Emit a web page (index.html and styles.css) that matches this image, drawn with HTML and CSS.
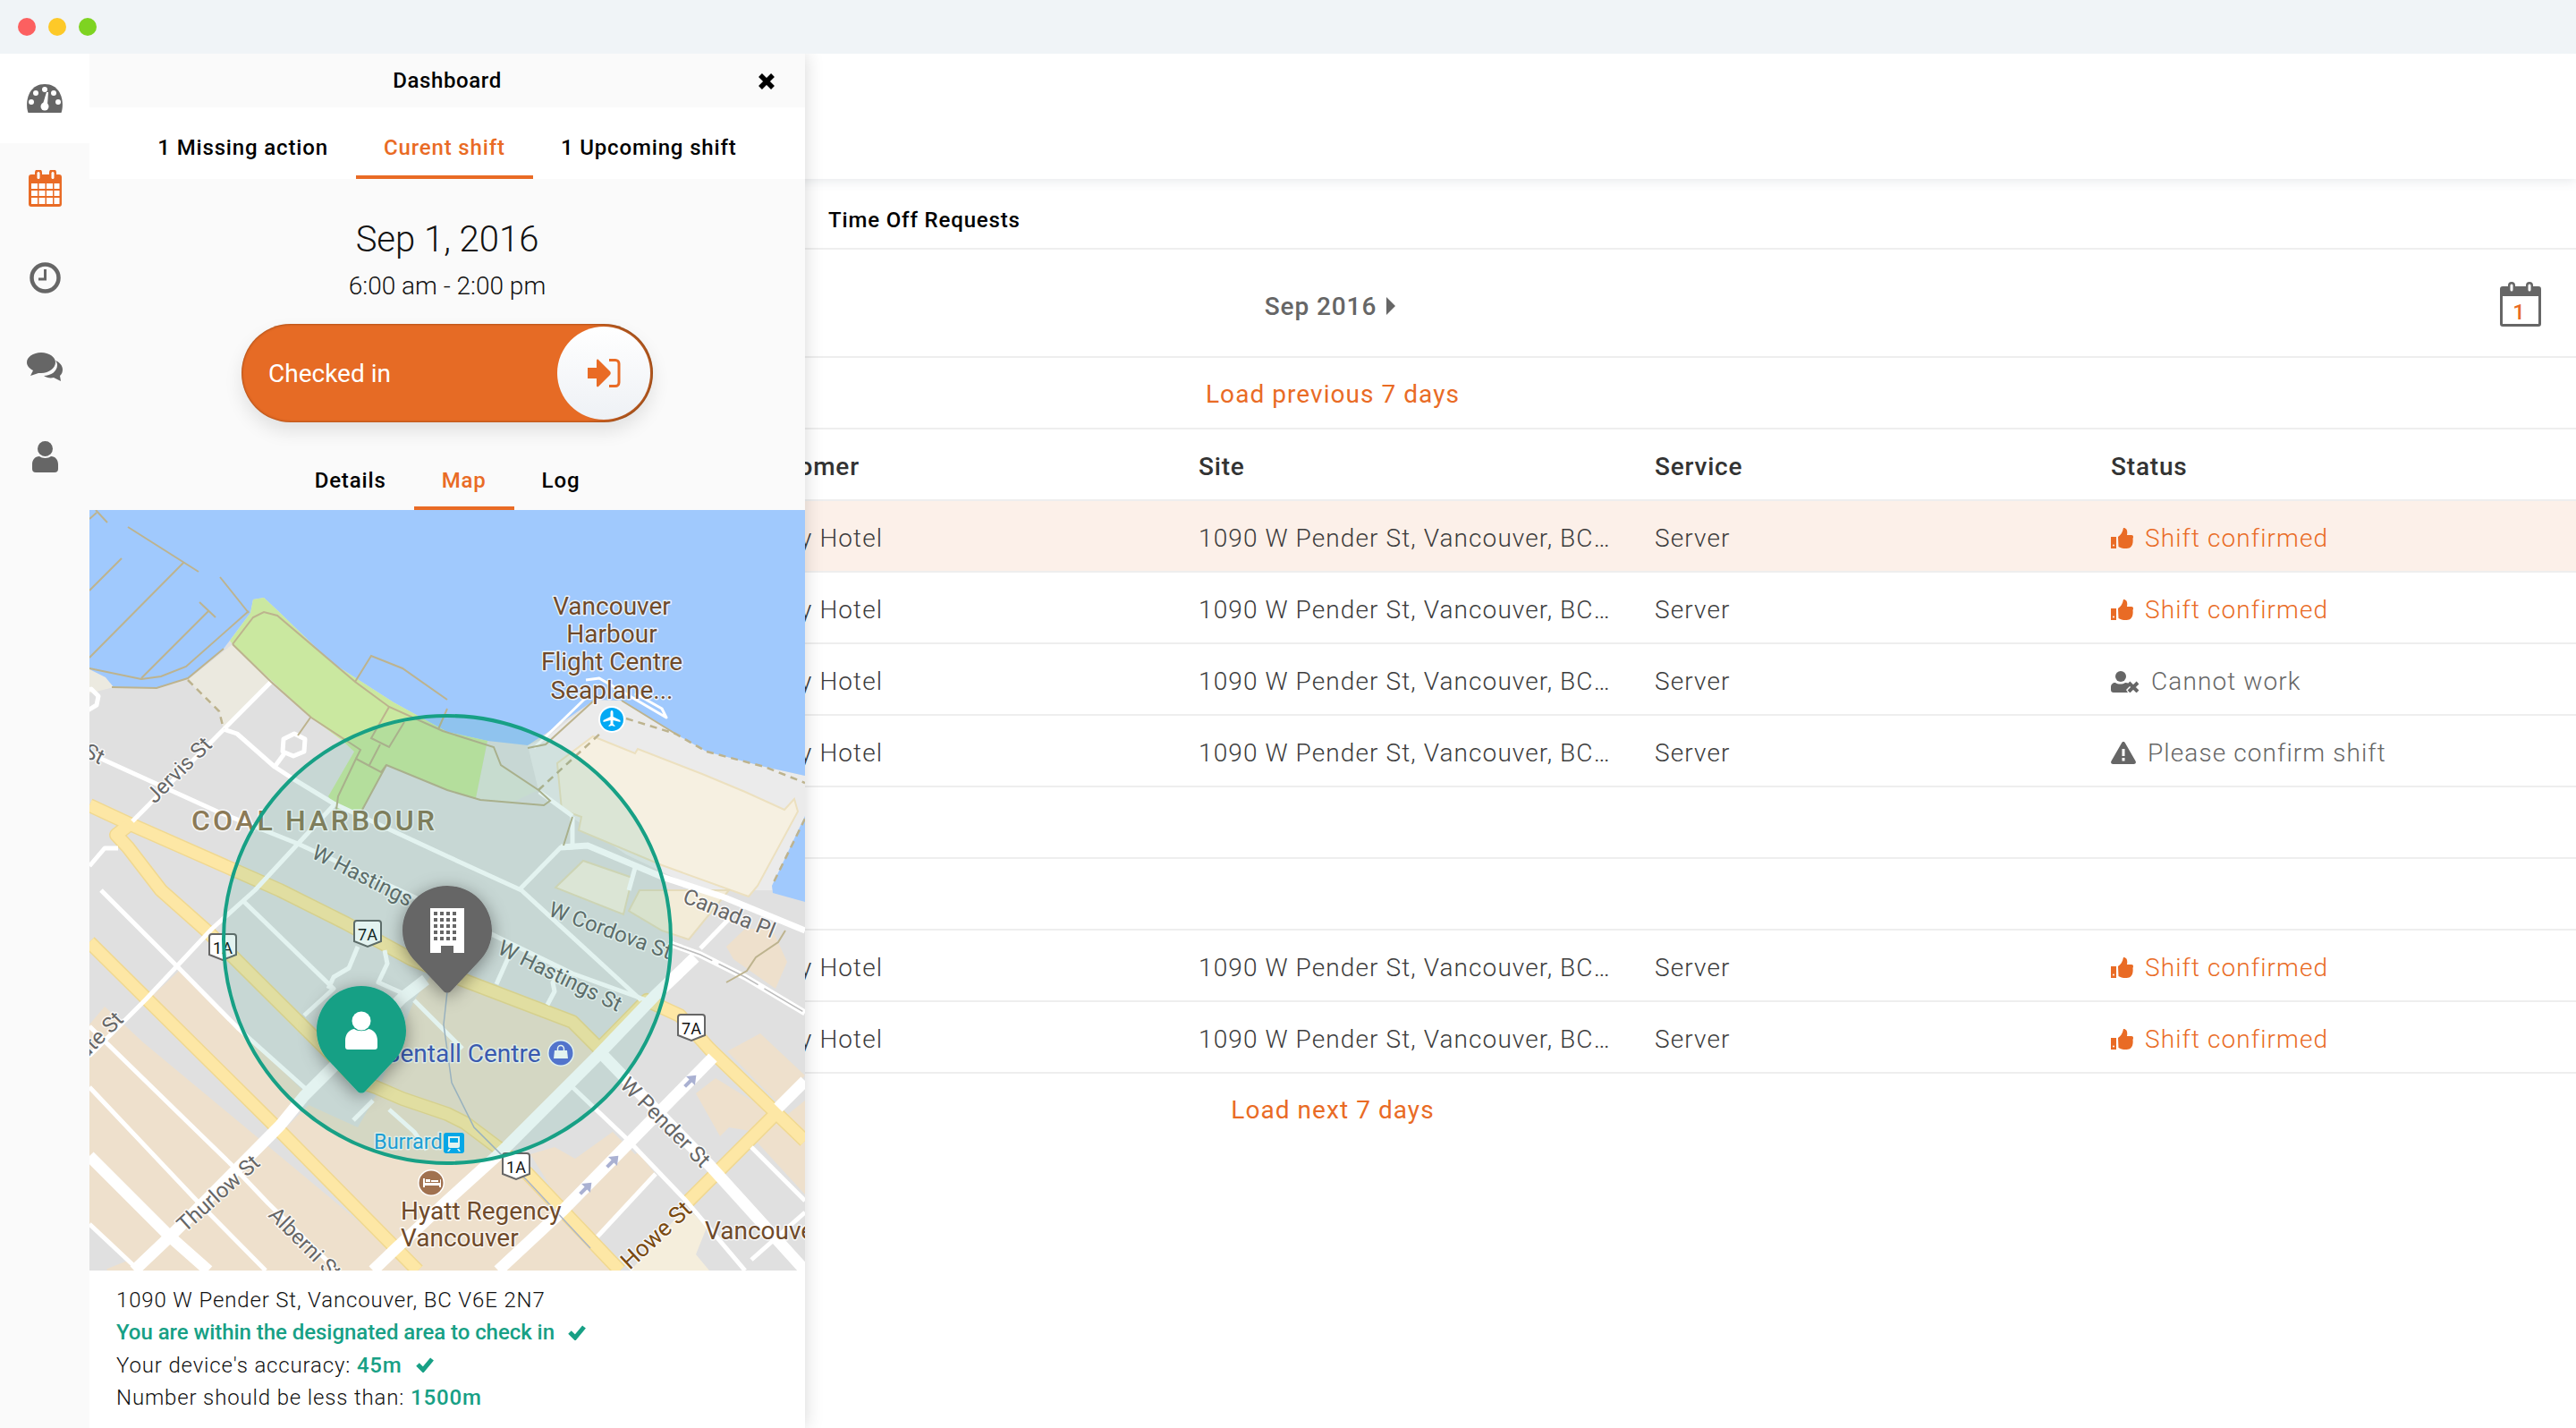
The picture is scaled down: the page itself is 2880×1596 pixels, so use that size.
FILE: index.html
```html
<!DOCTYPE html>
<html lang="en">
<head>
<meta charset="utf-8">
<title>Dashboard</title>
<link rel="stylesheet" href="styles.css">
</head>
<body>
<header class="titlebar">
  <span class="dot dot-red"></span><span class="dot dot-yellow"></span><span class="dot dot-green"></span>
</header>
<div class="app">
  <nav class="sidebar">
    <a class="nav-item nav-active">
      <svg width="40" height="32" viewBox="0 0 40 32"><path fill="#666" d="M1.500 32C-2 23 0 0 20 0s22 23 18.500 32Z"/><g fill="#fff"><circle cx="20" cy="6" r="3"/><circle cx="10" cy="10" r="3"/><circle cx="30" cy="10" r="3"/><circle cx="5" cy="20" r="3"/><circle cx="35" cy="20" r="3"/><circle cx="20" cy="25" r="4.500"/><path d="M18 22 22 9h2l-1 14Z"/></g></svg>
    </a>
    <a class="nav-item">
      <svg width="37" height="41" viewBox="0 0 37 41"><path fill="#e96b25" d="M3 5h4V3a4 4 0 0 1 8 0v2h8V3a4 4 0 0 1 8 0v2h3a3 3 0 0 1 3 3v30a3 3 0 0 1-3 3H3a3 3 0 0 1-3-3V8a3 3 0 0 1 3-3Z"/><g fill="#fff"><rect x="9.500" y="2" width="3" height="8" rx="1.500"/><rect x="25.500" y="2" width="3" height="8" rx="1.500"/><rect x="3" y="15" width="7" height="6"/><rect x="11.500" y="15" width="7" height="6"/><rect x="20" y="15" width="7" height="6"/><rect x="28.500" y="15" width="6" height="6"/><rect x="3" y="23" width="7" height="6"/><rect x="11.500" y="23" width="7" height="6"/><rect x="20" y="23" width="7" height="6"/><rect x="28.500" y="23" width="6" height="6"/><rect x="3" y="31" width="7" height="7"/><rect x="11.500" y="31" width="7" height="7"/><rect x="20" y="31" width="7" height="7"/><rect x="28.500" y="31" width="6" height="7"/></g></svg>
    </a>
    <a class="nav-item">
      <svg width="35" height="35" viewBox="0 0 35 35"><circle cx="17.500" cy="17.500" r="15" fill="none" stroke="#666" stroke-width="4.500"/><path fill="none" stroke="#666" stroke-width="3" d="M17.500 8v11H10"/></svg>
    </a>
    <a class="nav-item">
      <svg width="40" height="32" viewBox="0 0 40 32"><path fill="#666" d="M32 9c5 2 8 6 8 10 0 3-1 5-3 7l1 6-8-4c-4 1-8 0-11-2 8 0 15-5 15-12 0-2-1-4-2-5Z"/><path fill="#666" d="M16 0c9 0 16 5 16 11s-7 12-16 12l-3 0-9 3 3-6c-4-2-7-5-7-9C0 5 7 0 16 0Z"/></svg>
    </a>
    <a class="nav-item">
      <svg width="29" height="35" viewBox="0 0 29 35"><circle cx="14.500" cy="8.500" r="8.500" fill="#666"/><path fill="#666" d="M8 17c3 2.500 10 2.500 13 0 5 0 8 4 8 9v5a4 4 0 0 1-4 4H4a4 4 0 0 1-4-4v-5c0-5 3-9 8-9Z"/></svg>
    </a>
  </nav>

  <main class="main">
    <div class="topbar"></div>
    <div class="row tabs-row"><span class="tab-title">Time Off Requests</span></div>
    <div class="row cal-row">
      <span class="month">Sep 2016</span><span class="month-caret"></span>
      <svg class="cal-icon" width="46" height="50" viewBox="0 0 46 50"><path fill="#666" d="M3 5h6V4a4 4 0 0 1 8 0v1h12V4a4 4 0 0 1 8 0v1h6a3 3 0 0 1 3 3v39a3 3 0 0 1-3 3H3a3 3 0 0 1-3-3V8a3 3 0 0 1 3-3Z"/><rect x="3" y="16" width="40" height="31" fill="#fff"/><rect x="11.500" y="2.500" width="3" height="8" rx="1.500" fill="#fff"/><rect x="31.500" y="2.500" width="3" height="8" rx="1.500" fill="#fff"/><text class="cal-num" x="21" y="42" text-anchor="middle">1</text></svg>
    </div>
    <div class="row load-row"><a class="load">Load previous 7 days</a></div>
    <div class="row grid-row head-row"><span>Customer</span><span>Site</span><span>Service</span><span>Status</span></div>

    <div class="row grid-row row-active"><span>Derby Hotel</span><span>1090 W Pender St, Vancouver, BC…</span><span>Server</span>
      <span class="status status-ok"><svg class="st-icon" width="25" height="24" viewBox="0 0 25 24"><path fill="#e96b25" d="M0 10h6v13H0Zm8 0c3-2 5-5 6-10 3 0 5 2 4 8h5c2 0 2.500 2 1.500 4 .5 3 0 8-3 10-4 2-10 1-13-1Z"/><circle cx="3" cy="19.500" r="1" fill="#fcf0e9"/></svg>Shift confirmed</span></div>
    <div class="row grid-row"><span>Derby Hotel</span><span>1090 W Pender St, Vancouver, BC…</span><span>Server</span>
      <span class="status status-ok"><svg class="st-icon" width="25" height="24" viewBox="0 0 25 24"><path fill="#e96b25" d="M0 10h6v13H0Zm8 0c3-2 5-5 6-10 3 0 5 2 4 8h5c2 0 2.500 2 1.500 4 .5 3 0 8-3 10-4 2-10 1-13-1Z"/><circle cx="3" cy="19.500" r="1" fill="#fff"/></svg>Shift confirmed</span></div>
    <div class="row grid-row"><span>Derby Hotel</span><span>1090 W Pender St, Vancouver, BC…</span><span>Server</span>
      <span class="status status-no"><svg class="st-icon" width="32" height="24" viewBox="0 0 32 24"><circle cx="11" cy="6" r="6" fill="#666"/><path fill="#666" d="M5 13c3 2 8 2 11 0 3 0 5 1 6 3l-5 5 2 3H3a3 3 0 0 1-3-3v-3c0-3 2-5 5-5Z"/><path stroke="#666" stroke-width="4" d="m20 13 10 10m0-10L20 23"/></svg>Cannot work</span></div>
    <div class="row grid-row"><span>Derby Hotel</span><span>1090 W Pender St, Vancouver, BC…</span><span>Server</span>
      <span class="status status-no"><svg class="st-icon" width="28" height="25" viewBox="0 0 28 25"><path fill="#666" d="M14 0c1 0 1.500.5 2 1.500l11.500 20c1 2 0 3.500-2 3.500H2.500c-2 0-3-1.500-2-3.500L12 1.500C12.500.5 13 0 14 0Z"/><path fill="#fff" d="M12.500 8h3v8h-3Zm0 10h3v3.500h-3Z"/></svg>Please confirm shift</span></div>
    <div class="row empty-row"></div>
    <div class="row empty-row"></div>
    <div class="row grid-row"><span>Derby Hotel</span><span>1090 W Pender St, Vancouver, BC…</span><span>Server</span>
      <span class="status status-ok"><svg class="st-icon" width="25" height="24" viewBox="0 0 25 24"><path fill="#e96b25" d="M0 10h6v13H0Zm8 0c3-2 5-5 6-10 3 0 5 2 4 8h5c2 0 2.500 2 1.500 4 .5 3 0 8-3 10-4 2-10 1-13-1Z"/><circle cx="3" cy="19.500" r="1" fill="#fff"/></svg>Shift confirmed</span></div>
    <div class="row grid-row"><span>Derby Hotel</span><span>1090 W Pender St, Vancouver, BC…</span><span>Server</span>
      <span class="status status-ok"><svg class="st-icon" width="25" height="24" viewBox="0 0 25 24"><path fill="#e96b25" d="M0 10h6v13H0Zm8 0c3-2 5-5 6-10 3 0 5 2 4 8h5c2 0 2.500 2 1.500 4 .5 3 0 8-3 10-4 2-10 1-13-1Z"/><circle cx="3" cy="19.500" r="1" fill="#fff"/></svg>Shift confirmed</span></div>
    <div class="load-next"><a class="load">Load next 7 days</a></div>
  </main>

  <aside class="panel">
    <div class="panel-head">
      <span class="panel-title">Dashboard</span>
      <svg class="panel-close" width="20" height="20" viewBox="0 0 20 20"><path stroke="#000" stroke-width="5.500" d="m3 3 14 14m0-14L3 17"/></svg>
    </div>
    <div class="tabs tabs-top">
      <a class="tab">1 Missing action</a><a class="tab tab-on">Curent shift</a><a class="tab">1 Upcoming shift</a>
    </div>
    <div class="shift">
      <div class="shift-date">Sep 1, 2016</div>
      <div class="shift-time">6:00 am - 2:00 pm</div>
      <div class="toggle">
        <span class="toggle-label">Checked in</span>
        <span class="toggle-knob">
          <svg width="37" height="32" viewBox="0 0 37 32"><path fill="#e96b25" d="M0 10h10V2c0-1 1-2 2-1l13 13c1 1 1 3 0 4L12 31c-1 1-2 0-2-1v-8H0Z"/><path fill="none" stroke="#e96b25" stroke-width="3" d="M24 1.500h7a4 4 0 0 1 4 4v21a4 4 0 0 1-4 4h-7"/></svg>
        </span>
      </div>
    </div>
    <div class="tabs tabs-sub">
      <a class="tab">Details</a><a class="tab tab-on">Map</a><a class="tab">Log</a>
    </div>
    <svg class="map" width="800" height="850" viewBox="0 0 800 850">
      <defs>
        <filter id="pin-shadow" x="-40%" y="-40%" width="180%" height="180%"><feDropShadow dx="0" dy="4" stdDeviation="10" flood-color="#000" flood-opacity=".4"/></filter>
        <path id="shield" d="M4 1H28a3 3 0 0 1 3 3V24L16 30 1 24V4a3 3 0 0 1 3-3Z" fill="#fff" stroke="#666" stroke-width="2"/>
        <path id="arrow" d="M-2 9 -2 0-7 0 0-9 7 0 2 0 2 9Z" fill="#aab1d2"/>
      </defs>
      <rect width="800" height="850" fill="#e0e0e0"/>
      <g fill="#eee0cc">
        <path d="M0 575 17 555 60 595 367 850 20 850 0 800Z"/>
        <path d="M67 546 100 515 240 650 213 685Z"/>
        <path d="M215 695 245 665 300 690 320 655 330 630 363 548 385 515 417 525 540 572 570 602 463 715 593 850 367 850Z"/>
        <path d="M493 720 520 712 543 725 585 695 630 740 530 780Z"/>
        <path d="M678 652 700 635 760 672 745 695 715 690 705 700Z"/>
        <path d="M613 718 633 742 568 812 537 783Z"/>
        <path d="M712 488 733 468 763 468 780 505 767 535 720 502Z"/>
        <path d="M713 605 750 585 800 632 770 663Z"/>
        <path d="M775 680 800 660 800 765 745 705Z"/>
      </g>
      <path d="M0 800 45 838 15 850 0 850Z" fill="#e0e0e0"/>
      <path d="M667 778 690 802 678 832 693 850 605 850Z" fill="#f5eedc"/>
      <path d="M510 255 565 212 595 213 655 250 690 270 755 287 800 297 800 438 763 425 683 425 600 385 527 335 502 313 490 263Z" fill="#ebebeb"/>
      <path d="M563 253 610 272 613 267 685 295 733 315 777 335 788 323 792 337 747 420 737 432 640 397 547 358 550 343 528 335 523 283Z" fill="#f6f0e1" stroke="#ece0bf" stroke-width="2"/>
      <path d="M521 422 552 392 607 411 597 452Z" fill="#f6f0e1" stroke="#e6dcbb" stroke-width="2"/>
      <path d="M603 448 615 425 715 425 670 480 640 470Z" fill="#f3ecd8" stroke="#e6dcbb" stroke-width="2"/>
      <path d="M110 190 160 150 203 190 150 245 145 225 130 213Z" fill="#ebe9df"/>
      <path d="M445 262 432 322 470 328 502 313 460 285 452 265Z" fill="#e0e5da"/>
      <path fill="#a0c9fd" d="M0 0H800V297L755 287 690 270 655 250 595 213 565 212 510 250 490 263 445 258 400 248 340 215 270 170 210 112 195 98 183 100 180 115 165 135 150 155 110 188 75 199 25 198 0 178Z"/>
      <path fill="#a0c9fd" d="M800 342 763 420 764 428 800 438Z"/>
      <path fill="#eceae0" d="M0 178 18 187 27 198 0 205Z"/>
      <path fill="#cae8a0" d="M157 146 180 115 183 100 195 98 210 112 270 170 340 215 400 248 445 258 432 322 400 313 332 285 305 335 277 335 267 320 296 270 283 258 248 232 203 190 160 150Z"/>
      <g fill="none" stroke="#fde7a5" stroke-width="13" stroke-linejoin="round">
        <polyline class="y-case" points="0,483 207,688 367,850"/>
        <polyline class="y-case" points="0,330 43,350 213,425 287,462 360,502 417,525 540,572 570,602 623,548 660,565 693,602 800,705"/>
        <polyline class="y-case" points="43,353 30,363 43,377 80,425 133,472 300,638 320,645 350,658 400,675 420,685 460,715 490,742 593,850"/>
        <polyline class="y-case" points="767,675 667,775"/>
        <polyline points="0,483 207,688 367,850"/>
        <polyline points="0,330 43,350 213,425 287,462 360,502 417,525 540,572 570,602 623,548 660,565 693,602 800,705"/>
        <polyline points="43,353 30,363 43,377 80,425 133,472 300,638 320,645 350,658 400,675 420,685 460,715 490,742 593,850"/>
        <polyline points="767,675 667,775"/>
      </g>
      <g fill="none" stroke="#fff" stroke-width="5" stroke-linejoin="round">
        <polyline points="203,192 48,348"/>
        <polyline points="32,378 17,378 0,398"/>
        <polyline points="150,245 165,250 207,287 227,300 273,328 400,387 483,425 617,548"/>
        <polyline points="0,272 143,337 233,373 347,425 400,450 540,518 623,548"/>
        <polyline points="273,330 185,425 137,468 63,547 0,610"/>
        <polyline points="13,425 100,512 167,580 243,648"/>
        <polyline points="173,438 273,535 240,565"/>
        <polyline points="300,488 290,512 273,522 267,535"/>
        <polyline points="330,492 333,507 323,528 350,540"/>
        <polyline points="363,548 417,602"/>
        <polyline points="295,682 317,660"/>
        <polyline points="335,670 363,695 377,715"/>
        <polyline points="0,577 160,733 200,775 277,850"/>
        <polyline points="0,645 120,772 197,850"/>
        <polyline points="0,798 50,845"/>
        <polyline points="455,530 475,485"/>
        <polyline points="512,553 520,538 518,528 528,512"/>
        <polyline points="540,645 600,702 667,772 733,850"/>
        <polyline points="540,343 540,377 527,377 480,425"/>
        <polyline points="503,315 540,342"/>
        <polyline points="603,425 610,400"/>
        <polyline points="683,490 717,455"/>
        <polyline points="740,712 800,772"/>
        <polyline points="633,742 568,812"/>
        <polyline points="740,838 800,785"/>
        <polyline points="218,272 207,287"/>
        <polygon points="217,256 229,250 241,256 240,270 228,275 216,270"/>
        <polygon points="-12,205 2,200 10,208 8,218 -2,224 -12,220"/>
        <polyline stroke-width="3" points="497,266 558,207"/>
        <polyline stroke-width="3" points="555,190 570,188 645,232 640,222 610,205"/>
      </g>
      <g fill="none" stroke="#fff" stroke-width="13">
        <polyline points="376,525 350,545 240,655 213,688 90,812 50,850"/>
        <polyline points="0,722 90,812 133,850"/>
        <polyline points="697,612 530,782 457,850"/>
        <polyline points="677,500 633,542 568,610 463,715 400,772 343,825 317,850"/>
        <polyline points="570,605 693,732 800,850"/>
        <polyline points="770,668 800,638"/>
      </g>
      <polyline fill="none" stroke="#fff" stroke-width="7" points="527,377 557,375 640,410 710,433 800,470"/>
      <polyline fill="none" stroke="#fff" stroke-width="7" points="650,485 683,497 733,522 800,562"/>
      <polyline fill="none" stroke="#bbb" stroke-width="1.500" stroke-dasharray="50 8" points="650,485 683,497 733,522 800,562"/>
      <polyline fill="none" stroke="#aab4c8" stroke-width="1.500" points="402,520 396,575 405,640 430,690 490,750 560,825"/>
      <g fill="none" stroke="#bdb38e" stroke-width="2">
        <path d="M0 10 8 3M7 0 20 14M43 19 122 69M105 59 0 165M36 54 0 90M146 75 178 115M123 103 141 120M133 113 58 188"/>
        <path d="M178 113 108 175 80 186 58 189 0 177"/>
        <path d="M25 198 75 199 110 188 150 155"/>
        <path d="M160 150 183 120 195 114 210 118 297 192 335 220 395 247 452 265 460 285 502 313 515 325 508 330 437 324 400 313 332 285 326 293 298 278 278 320 276 335"/>
        <path d="M160 150 203 192 248 232 303 268 298 278M297 192 315 163 350 177 400 212M335 220 315 255 335 265 352 237M325 262 313 285M390 245 400 222M247 232 233 252M332 285 305 335"/>
        <path d="M490 266 510 262 565 212M595 213 655 250"/>
        <path d="M540 343 530 375M712 528 735 515 745 500 770 483 778 470"/>
      </g>
      <g fill="none" stroke="#bdb38e" stroke-width="2.500" stroke-dasharray="8 6">
        <path d="M110 190 130 210 145 225 150 245"/>
        <path d="M502 313 573 248M600 233 655 250 690 270 755 287 800 305"/>
        <path d="M800 345 763 420"/>
      </g>
      <text class="lbl lbl-brown" x="584" y="117" text-anchor="middle">Vancouver</text>
      <text class="lbl lbl-brown" x="584" y="148" text-anchor="middle">Harbour</text>
      <text class="lbl lbl-brown" x="584" y="179" text-anchor="middle">Flight Centre</text>
      <text class="lbl lbl-brown" x="584" y="211" text-anchor="middle">Seaplane...</text>
      <circle cx="584" cy="234" r="15" fill="#fff"/><circle cx="584" cy="234" r="13" fill="#03a9f4"/>
      <path fill="#fff" d="M584 224c1 0 1.500 1 1.500 3v4l8 4v2l-8-2v4l2 2v1l-3.500-1-3.500 1v-1l2-2v-4l-8 2v-2l8-4v-4c0-2 .5-3 1.500-3Z"/>
      <text class="lbl lbl-coal" x="114" y="358">COAL HARBOUR</text>
      <text class="lbl lbl-road" transform="translate(73 329) rotate(-45)">Jervis St</text>
      <text class="lbl lbl-road" transform="translate(-8 275) rotate(26)">St</text>
      <text class="lbl lbl-road" transform="translate(247 388) rotate(27)">W Hastings</text>
      <text class="lbl lbl-road" transform="translate(512 453) rotate(20)">W Cordova St</text>
      <text class="lbl lbl-road" transform="translate(455 495) rotate(26)">W Hastings St</text>
      <text class="lbl lbl-road" transform="translate(662 438) rotate(22)">Canada Pl</text>
      <text class="lbl lbl-road" transform="translate(-15 625) rotate(-45)">Bute St</text>
      <text class="lbl lbl-road" transform="translate(107 808) rotate(-42)">Thurlow St</text>
      <text class="lbl lbl-road" transform="translate(199 789) rotate(45)">Alberni St</text>
      <text class="lbl lbl-road" transform="translate(592 644) rotate(45)">W Pender St</text>
      <text class="lbl lbl-howe" transform="translate(604 850) rotate(-43)">Howe St</text>
      <text class="lbl lbl-blue" x="330" y="617">Bentall Centre</text>
      <circle cx="527" cy="607" r="15" fill="#fff"/><circle cx="527" cy="607" r="13.500" fill="#5a6fd6"/>
      <path fill="#fff" d="M520 604h14l1 9h-16Z"/><path fill="none" stroke="#fff" stroke-width="1.500" d="M523.500 604v-2a3.500 3.500 0 0 1 7 0v2"/>
      <text class="lbl lbl-burrard" x="318" y="714">Burrard</text>
      <rect x="396" y="696" width="23" height="23" rx="3" fill="#03a9f4"/>
      <path fill="#fff" d="M401 700h13v11a2 2 0 0 1-2 2h-9a2 2 0 0 1-2-2Zm1 14h2l-2 3h-2Zm11 0h-2l2 3h2Z"/>
      <rect x="403" y="702" width="9" height="5" fill="#03a9f4"/>
      <circle cx="382" cy="752" r="15" fill="#fff"/><circle cx="382" cy="752" r="13.500" fill="#a0714f"/>
      <path fill="#fff" d="M373 747h2v5h17v-3a1 1 0 0 1 1-1v9h-2v-2h-16v2h-2Zm3 1h5v3h-5Zm6 1h8v2h-8Z"/>
      <text class="lbl lbl-brown" x="348" y="793">Hyatt Regency</text>
      <text class="lbl lbl-brown" x="348" y="823">Vancouver</text>
      <text class="lbl lbl-brown" x="688" y="815">Vancouver</text>
      <use href="#arrow" transform="translate(672 638) rotate(45)"/>
      <use href="#arrow" transform="translate(585 728) rotate(45)"/>
      <use href="#arrow" transform="translate(555 758) rotate(45)"/>
      <g class="shield"><use href="#shield" x="133" y="473"/><text class="shield-text" x="149" y="496" text-anchor="middle">1A</text></g>
      <g class="shield"><use href="#shield" x="295" y="458"/><text class="shield-text" x="311" y="481" text-anchor="middle">7A</text></g>
      <g class="shield"><use href="#shield" x="657" y="563"/><text class="shield-text" x="673" y="586" text-anchor="middle">7A</text></g>
      <g class="shield"><use href="#shield" x="461" y="718"/><text class="shield-text" x="477" y="741" text-anchor="middle">1A</text></g>
      <circle cx="400" cy="480" r="250" fill="#17a085" fill-opacity=".12" stroke="#17a085" stroke-width="4"/>
      <g filter="url(#pin-shadow)">
        <path fill="#666" d="M400 420c28 0 50 22 50 50 0 14-6 26-15 35l-31 33c-2 2-6 2-8 0l-31-33c-9-9-15-21-15-35 0-28 22-50 50-50Z"/>
      </g>
      <path fill="#fff" d="M381 445h38v50h-12v-8h-14v8h-12Z"/>
      <g fill="#666"><rect x="385" y="449" width="4" height="4"/><rect x="392" y="449" width="4" height="4"/><rect x="399" y="449" width="4" height="4"/><rect x="406" y="449" width="4" height="4"/><rect x="385" y="456" width="4" height="4"/><rect x="392" y="456" width="4" height="4"/><rect x="399" y="456" width="4" height="4"/><rect x="406" y="456" width="4" height="4"/><rect x="385" y="463" width="4" height="4"/><rect x="392" y="463" width="4" height="4"/><rect x="399" y="463" width="4" height="4"/><rect x="406" y="463" width="4" height="4"/><rect x="385" y="470" width="4" height="4"/><rect x="392" y="470" width="4" height="4"/><rect x="399" y="470" width="4" height="4"/><rect x="406" y="470" width="4" height="4"/><rect x="385" y="477" width="4" height="4"/><rect x="392" y="477" width="4" height="4"/><rect x="399" y="477" width="4" height="4"/><rect x="406" y="477" width="4" height="4"/></g>
      <g filter="url(#pin-shadow)">
        <path fill="#17a085" d="M304 532c28 0 50 22 50 50 0 14-6 26-15 35l-31 33c-2 2-6 2-8 0l-31-33c-9-9-15-21-15-35 0-28 22-50 50-50Z"/>
      </g>
      <circle cx="304" cy="571" r="10.500" fill="#fff"/>
      <path fill="#fff" d="M296 580c4 3 12 3 16 0 6 1 10 6 10 13v7a3 3 0 0 1-3 3h-30a3 3 0 0 1-3-3v-7c0-7 4-12 10-13Z"/>
    </svg>
    <div class="info">
      <p>1090 W Pender St, Vancouver, BC V6E 2N7</p>
      <p class="info-ok">You are within the designated area to check in<svg class="check" width="20" height="17" viewBox="0 0 20 17"><path fill="none" stroke="#17a085" stroke-width="5" d="m2 8 6 6L18 2"/></svg></p>
      <p>Your device's accuracy: <b>45m</b><svg class="check" width="20" height="17" viewBox="0 0 20 17"><path fill="none" stroke="#17a085" stroke-width="5" d="m2 8 6 6L18 2"/></svg></p>
      <p>Number should be less than: <b>1500m</b></p>
    </div>
  </aside>
</div>
</body>
</html>
```

FILE: styles.css
```css
* { box-sizing: border-box; }
html, body { margin: 0; height: 100%; }
body {
  width: 2880px;
  height: 1596px;
  overflow: hidden;
  background: #fff;
  font-family: Roboto, sans-serif;
  display: flex;
  flex-direction: column;
}

.titlebar {
  height: 60px;
  flex: none;
  background: #f0f4f7;
  display: flex;
  align-items: center;
  gap: 14px;
  padding-left: 20px;
  position: relative;
  z-index: 2;
}
.dot { width: 20px; height: 20px; border-radius: 50%; }
.dot-red { background: #fc6060; }
.dot-yellow { background: #fdc928; }
.dot-green { background: #7ed321; }

.app { flex: 1; display: flex; position: relative; min-height: 0; }

.sidebar { width: 100px; flex: none; background: #fafafa; position: relative; z-index: 2; }
.nav-item { height: 100px; display: flex; align-items: center; justify-content: center; }
.nav-active { background: #fff; }

.main { flex: 1; min-width: 0; overflow: hidden; }
.topbar { height: 140px; background: #fff; box-shadow: 0 2px 12px rgba(60, 80, 100, .13); position: relative; }
.row { border-bottom: 2px solid #eee; height: 80px; display: flex; align-items: center; }
.tabs-row { height: 79px; padding: 14px 0 0 826px; }
.tab-title { font-size: 24px; font-weight: 500; color: #000; letter-spacing: .85px; }
.cal-row { height: 121px; position: relative; justify-content: center; color: #666; padding: 7px 6px 0 0; }
.month { font-size: 28px; font-weight: 500; color: #666; letter-spacing: .9px; }
.month-caret {
  margin-left: 11px;
  border-left: 10px solid #666;
  border-top: 10px solid transparent;
  border-bottom: 10px solid transparent;
}
.cal-icon { position: absolute; right: 39px; top: 36px; }
.cal-num { font-size: 24px; font-weight: 500; fill: #e96b25; font-family: Roboto, sans-serif; }
.load-row { justify-content: center; padding-top: 2px; }
.load { font-size: 28px; color: #e96b25; letter-spacing: 1.050px; font-weight: 400; }
.load-next { height: 80px; display: flex; align-items: center; justify-content: center; }

.grid-row {
  display: grid;
  grid-template-columns: 508px 510px 510px 1fr;
  padding: 5px 0 0 732px;
  font-size: 28px;
  font-weight: 300;
  color: #3c3c3c;
  letter-spacing: 1.1px;
}
.head-row { font-weight: 500; letter-spacing: .8px; color: #333; padding-top: 4px; }
.row-active { background: #fcf0e9; }
.status { display: flex; align-items: center; }
.status-ok { color: #e96b25; }
.status-no { color: #666; }
.st-icon { margin-right: 13px; flex: none; }

.panel {
  position: absolute;
  left: 100px;
  top: 0;
  bottom: 0;
  width: 800px;
  background: #fafafa;
  box-shadow: 0 0 20px rgba(0, 0, 0, .16);
  display: flex;
  flex-direction: column;
}
.panel-head { height: 60px; flex: none; position: relative; display: flex; align-items: center; justify-content: center; }
.panel-title { font-size: 24px; font-weight: 500; color: #000; letter-spacing: .6px; }
.panel-close { position: absolute; right: 33px; top: 21px; }

.tabs { display: flex; justify-content: center; flex: none; }
.tabs-top { height: 80px; background: #fff; }
.tabs-sub { height: 60px; }
.tab {
  display: flex;
  align-items: center;
  padding: 0 31px;
  font-size: 24px;
  font-weight: 500;
  color: #000;
  letter-spacing: .85px;
  border-bottom: 4px solid transparent;
}
.tabs-top .tab { padding-top: 14px; }
.tabs-sub .tab { padding-bottom: 3px; }
.tab-on { color: #e96b25; border-bottom-color: #e96b25; }

.shift { height: 310px; flex: none; display: flex; flex-direction: column; align-items: center; padding-top: 42px; }
.shift-date { font-size: 40px; font-weight: 300; color: #111; line-height: 52px; }
.shift-time { font-size: 28px; font-weight: 300; color: #111; line-height: 40px; margin-top: 6px; }
.toggle {
  margin-top: 22px;
  width: 460px;
  height: 110px;
  flex: none;
  border-radius: 55px;
  background: linear-gradient(90deg, #e66b25 84%, #b85a20 92%);
  box-shadow: 0 10px 20px rgba(0, 0, 0, .1), inset 0 0 3px rgba(90, 40, 0, .7);
  display: flex;
  align-items: center;
  justify-content: space-between;
  padding: 0 3px 0 30px;
}
.toggle-label { font-size: 28px; font-weight: 400; color: #fff; }
.toggle-knob {
  width: 104px;
  height: 104px;
  border-radius: 50%;
  background: linear-gradient(#fff, #eef1f5);
  display: flex;
  align-items: center;
  justify-content: center;
}

.map { display: block; flex: none; }

.info { flex: 1; background: #fff; padding: 15px 30px 0; font-size: 24px; font-weight: 300; color: #111; letter-spacing: .85px; }
.info p { margin: 0; height: 36.300px; line-height: 36.300px; display: flex; align-items: center; white-space: pre; }
.info b { font-weight: 500; color: #17a085; }
.info p.info-ok { color: #17a085; font-weight: 500; letter-spacing: -.05px; }
.check { margin-left: 15px; }

.y-case { stroke: #f0d890; stroke-width: 16px; }
.lbl { font-family: Roboto, sans-serif; paint-order: stroke; stroke: rgba(255, 255, 255, .75); stroke-width: 3px; stroke-linejoin: round; }
.lbl-brown { font-size: 28px; fill: #6f4a2a; }
.lbl-coal { font-size: 32px; font-weight: 500; fill: #8c7a57; letter-spacing: 3.200px; }
.lbl-road { font-size: 24px; fill: #666; }
.lbl-howe { font-size: 26px; fill: #7a4a10; }
.lbl-blue { font-size: 28px; fill: #3f51b5; }
.lbl-burrard { font-size: 23.500px; fill: #1e9fe0; }
.shield-text { font-family: Roboto, sans-serif; font-size: 18px; fill: #111; }
```
